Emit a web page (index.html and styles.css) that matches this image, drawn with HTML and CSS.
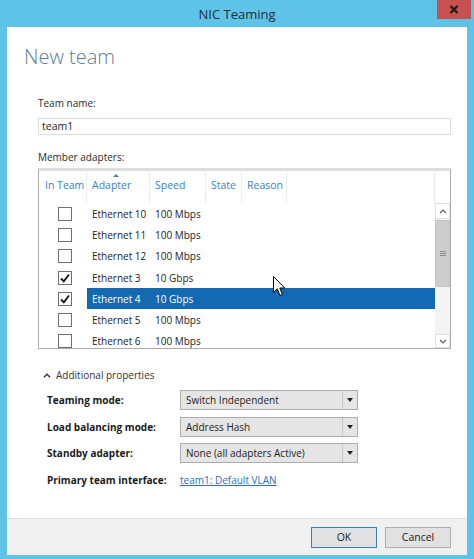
FILE: index.html
```html
<!DOCTYPE html>
<html lang="en">
<head>
    <meta charset="UTF-8">
    <title>NIC Teaming</title>
    <link rel="stylesheet" href="styles.css">
</head>
<body>
<div class="window">
    <div class="titlebar">
        <span class="title">NIC Teaming</span>
        <button class="close-btn" aria-label="Close">
            <svg width="10" height="9" viewBox="0 0 10 9"><path d="M1.5 1 L8.5 8 M8.5 1 L1.5 8" stroke="#1a1a1a" stroke-width="2.2"/></svg>
        </button>
    </div>

    <div class="content">
        <h1 class="heading">New team</h1>

        <div class="form">
            <label class="field-label">Team name:</label>
            <div class="textbox">team1</div>

            <label class="field-label member-label">Member adapters:</label>
            <div class="listbox">
                <div class="list-head">
                    <div class="col c-team">In Team</div>
                    <div class="col c-adapter">Adapter<span class="sort-arrow"></span></div>
                    <div class="col c-speed">Speed</div>
                    <div class="col c-state">State</div>
                    <div class="col c-reason">Reason</div>
                    <div class="col c-fill"></div>
                    <div class="col c-scroll"></div>
                </div>
                <div class="list-body">
                    <div class="rows">
                        <div class="row">
                            <div class="c-team"><span class="check"></span></div>
                            <div class="cell">Ethernet 10</div><div class="cell">100 Mbps</div>
                        </div>
                        <div class="row">
                            <div class="c-team"><span class="check"></span></div>
                            <div class="cell">Ethernet 11</div><div class="cell">100 Mbps</div>
                        </div>
                        <div class="row">
                            <div class="c-team"><span class="check"></span></div>
                            <div class="cell">Ethernet 12</div><div class="cell">100 Mbps</div>
                        </div>
                        <div class="row">
                            <div class="c-team"><span class="check checked"><svg width="12" height="12" viewBox="0 0 12 12"><path d="M2 6.5 L4.8 9.3 L10 2.5" fill="none" stroke="#111" stroke-width="1.8"/></svg></span></div>
                            <div class="cell">Ethernet 3</div><div class="cell">10 Gbps</div>
                        </div>
                        <div class="row selected">
                            <div class="c-team"><span class="check checked"><svg width="12" height="12" viewBox="0 0 12 12"><path d="M2 6.5 L4.8 9.3 L10 2.5" fill="none" stroke="#111" stroke-width="1.8"/></svg></span></div>
                            <div class="cell">Ethernet 4</div><div class="cell">10 Gbps</div>
                        </div>
                        <div class="row">
                            <div class="c-team"><span class="check"></span></div>
                            <div class="cell">Ethernet 5</div><div class="cell">100 Mbps</div>
                        </div>
                        <div class="row">
                            <div class="c-team"><span class="check"></span></div>
                            <div class="cell">Ethernet 6</div><div class="cell">100 Mbps</div>
                        </div>
                    </div>
                    <div class="scrollbar">
                        <div class="sb-btn"><svg width="8" height="5" viewBox="0 0 8 5"><path d="M1 4 L4 1 L7 4" fill="none" stroke="#606060" stroke-width="1.2"/></svg></div>
                        <div class="sb-thumb"><span class="grip"></span></div>
                        <div class="sb-track"></div>
                        <div class="sb-btn sb-down"><svg width="8" height="5" viewBox="0 0 8 5"><path d="M1 1 L4 4 L7 1" fill="none" stroke="#606060" stroke-width="1.2"/></svg></div>
                    </div>
                </div>
            </div>

            <div class="expander">
                <svg width="8" height="5" viewBox="0 0 8 5"><path d="M1 4.2 L4 1.2 L7 4.2" fill="none" stroke="#333" stroke-width="1.4"/></svg>
                <span>Additional properties</span>
            </div>

            <div class="props">
                <div class="prop-label">Teaming mode:</div>
                <div class="combo"><span class="combo-text">Switch Independent</span><span class="combo-arrow"></span></div>

                <div class="prop-label">Load balancing mode:</div>
                <div class="combo"><span class="combo-text">Address Hash</span><span class="combo-arrow"></span></div>

                <div class="prop-label">Standby adapter:</div>
                <div class="combo"><span class="combo-text">None (all adapters Active)</span><span class="combo-arrow"></span></div>

                <div class="prop-label">Primary team interface:</div>
                <a class="link" href="#">team1: Default VLAN</a>
            </div>
        </div>
    </div>

    <div class="footer">
        <button class="btn btn-default">OK</button>
        <button class="btn">Cancel</button>
    </div>

    <!-- mouse pointer resting over the list -->
    <svg class="pointer" width="13" height="21" viewBox="0 0 13 21">
        <path d="M0.5 0.5 L0.5 16.5 L4.3 12.8 L7 19.5 L9.4 18.5 L6.8 12 L11.8 12 Z" fill="#fff" stroke="#000" stroke-width="1"/>
    </svg>
</div>
</body>
</html>
```

FILE: styles.css
```css
* { box-sizing: border-box; }

body {
    margin: 0;
    font-family: "Open Sans", "Noto Sans", sans-serif;
    font-size: 10px;
    color: #1e1e1e;
    background: #5ec3e6;
}

.window {
    position: relative;
    width: 474px;
    height: 559px;
    background: #5ec3e6;
    display: flex;
    flex-direction: column;
    padding: 0 7px 4px;
    overflow: hidden;
}

/* title bar */
.titlebar {
    height: 27px;
    flex: none;
    display: flex;
    align-items: center;
    justify-content: center;
}
.title {
    font-size: 13px;
    color: #1c2f3a;
    margin-top: 1px;
}
.close-btn {
    position: absolute;
    top: 0;
    right: 3px;
    width: 34px;
    height: 19px;
    border: none;
    background: #c75050;
    display: flex;
    align-items: center;
    justify-content: center;
    padding: 0;
}

/* main white area */
.content {
    flex: 1;
    background: #fff;
    padding: 16px 0 0 17px;
}
.heading {
    margin: 0;
    font-size: 20px;
    font-weight: 300;
    line-height: 28px;
    color: #5b7d8f;
}

.form {
    padding: 25px 16px 0 14px;
}
.field-label {
    display: block;
    line-height: 14px;
    color: #2a2a2a;
}
.textbox {
    margin-top: 8px;
    height: 17px;
    border: 1px solid #dcdcdc;
    padding: 0 3px;
    line-height: 15px;
    font-size: 10.5px;
}
.member-label {
    margin-top: 15px;
}

/* adapter list */
.listbox {
    margin-top: 4px;
    height: 181px;
    border: 1px solid #acacac;
    border-top: 3px solid #dedede;
    overflow: hidden;
}
.list-head {
    display: flex;
    height: 32px;
    color: #3d7fc0;
    font-size: 10.5px;
}
.list-head .col {
    border-right: 1px solid #ececec;
    padding: 7px 0 0 5px;
    position: relative;
}
.c-team { width: 48px; flex: none; }
.c-adapter { width: 63px; }
.c-speed { width: 56px; }
.c-state { width: 36px; }
.c-reason { width: 45px; }
.c-fill { flex: 1; }
.list-head .c-team { padding-left: 6px; }
.list-head .c-scroll { width: 15px; border-right: none; }
.sort-arrow {
    position: absolute;
    left: 26px;
    top: 3px;
    border-left: 3px solid transparent;
    border-right: 3px solid transparent;
    border-bottom: 3px solid #3d7fc0;
}

.list-body {
    display: flex;
    height: 145px;
}
.rows {
    flex: 1;
}
.row {
    display: flex;
    height: 21.3px;
    align-items: center;
    font-size: 10px;
    color: #222;
}
.row .c-team {
    display: flex;
    align-items: center;
    padding-left: 19px;
    align-self: stretch;
}
.row .cell { padding-left: 5px; }
.row .cell:nth-child(2) { width: 63px; }
.row.selected .cell { color: #fff; }
.row.selected .cell:nth-child(2) { background: #136ab2; }
.row.selected .cell:nth-child(3) { background: #136ab2; flex: 1; }
.row.selected .cell { align-self: stretch; display: flex; align-items: center; }

.check {
    width: 14px;
    height: 14px;
    border: 1px solid #6f6f6f;
    background: #fff;
    display: flex;
    align-items: center;
    justify-content: center;
}

.scrollbar {
    width: 15px;
    flex: none;
    display: flex;
    flex-direction: column;
    background: #f4f4f4;
}
.sb-btn {
    height: 16px;
    border: 1px solid #e0e0e0;
    background: #fff;
    display: flex;
    align-items: center;
    justify-content: center;
}
.sb-down { height: 14px; }
.sb-thumb {
    height: 67px;
    margin: 1px 0 0;
    background: #cdcdcd;
    border: 1px solid #c4c4c4;
    display: flex;
    align-items: center;
    justify-content: center;
}
.grip {
    width: 6px;
    height: 5px;
    border-top: 1px solid #8a8a8a;
    border-bottom: 1px solid #8a8a8a;
    background: linear-gradient(#8a8a8a, #8a8a8a) center / 6px 1px no-repeat;
}
.sb-track { flex: 1; }

/* additional properties */
.expander {
    margin-top: 19px;
    display: flex;
    align-items: center;
    gap: 5px;
    padding-left: 5px;
    color: #333;
    line-height: 14px;
}
.props {
    margin-top: 8px;
    display: grid;
    grid-template-columns: 133px 178px;
    grid-auto-rows: 20px;
    row-gap: 6.5px;
    padding-left: 9px;
    align-items: center;
}
.prop-label {
    font-weight: 700;
    color: #1a1a1a;
}
.combo {
    height: 20px;
    border: 1px solid #acacac;
    background: #e5e5e5;
    display: flex;
    align-items: center;
}
.combo-text {
    flex: 1;
    padding-left: 5px;
    color: #222;
}
.combo-arrow {
    width: 15px;
    height: 100%;
    border-left: 1px solid #c8c8c8;
    position: relative;
}
.combo-arrow::after {
    content: "";
    position: absolute;
    left: 4px;
    top: 7px;
    border-left: 3px solid transparent;
    border-right: 3px solid transparent;
    border-top: 4px solid #222;
}
.link {
    color: #2e6dbc;
    text-decoration: underline;
}

/* footer with buttons */
.footer {
    height: 37px;
    flex: none;
    background: #f0f0f0;
    border-top: 1px solid #dfdfdf;
    display: flex;
    justify-content: flex-end;
    align-items: center;
    gap: 8px;
    padding: 0 16px 0 0;
}
.btn {
    width: 66px;
    height: 21px;
    border: 1px solid #adadad;
    background: #e1e1e1;
    font-family: inherit;
    font-size: 10.5px;
    color: #222;
    padding: 0;
}
.btn-default {
    border-color: #3c7fb1;
    box-shadow: inset 0 0 0 1px #d8e6f2;
}

.pointer {
    position: absolute;
    left: 273px;
    top: 276px;
}
```
